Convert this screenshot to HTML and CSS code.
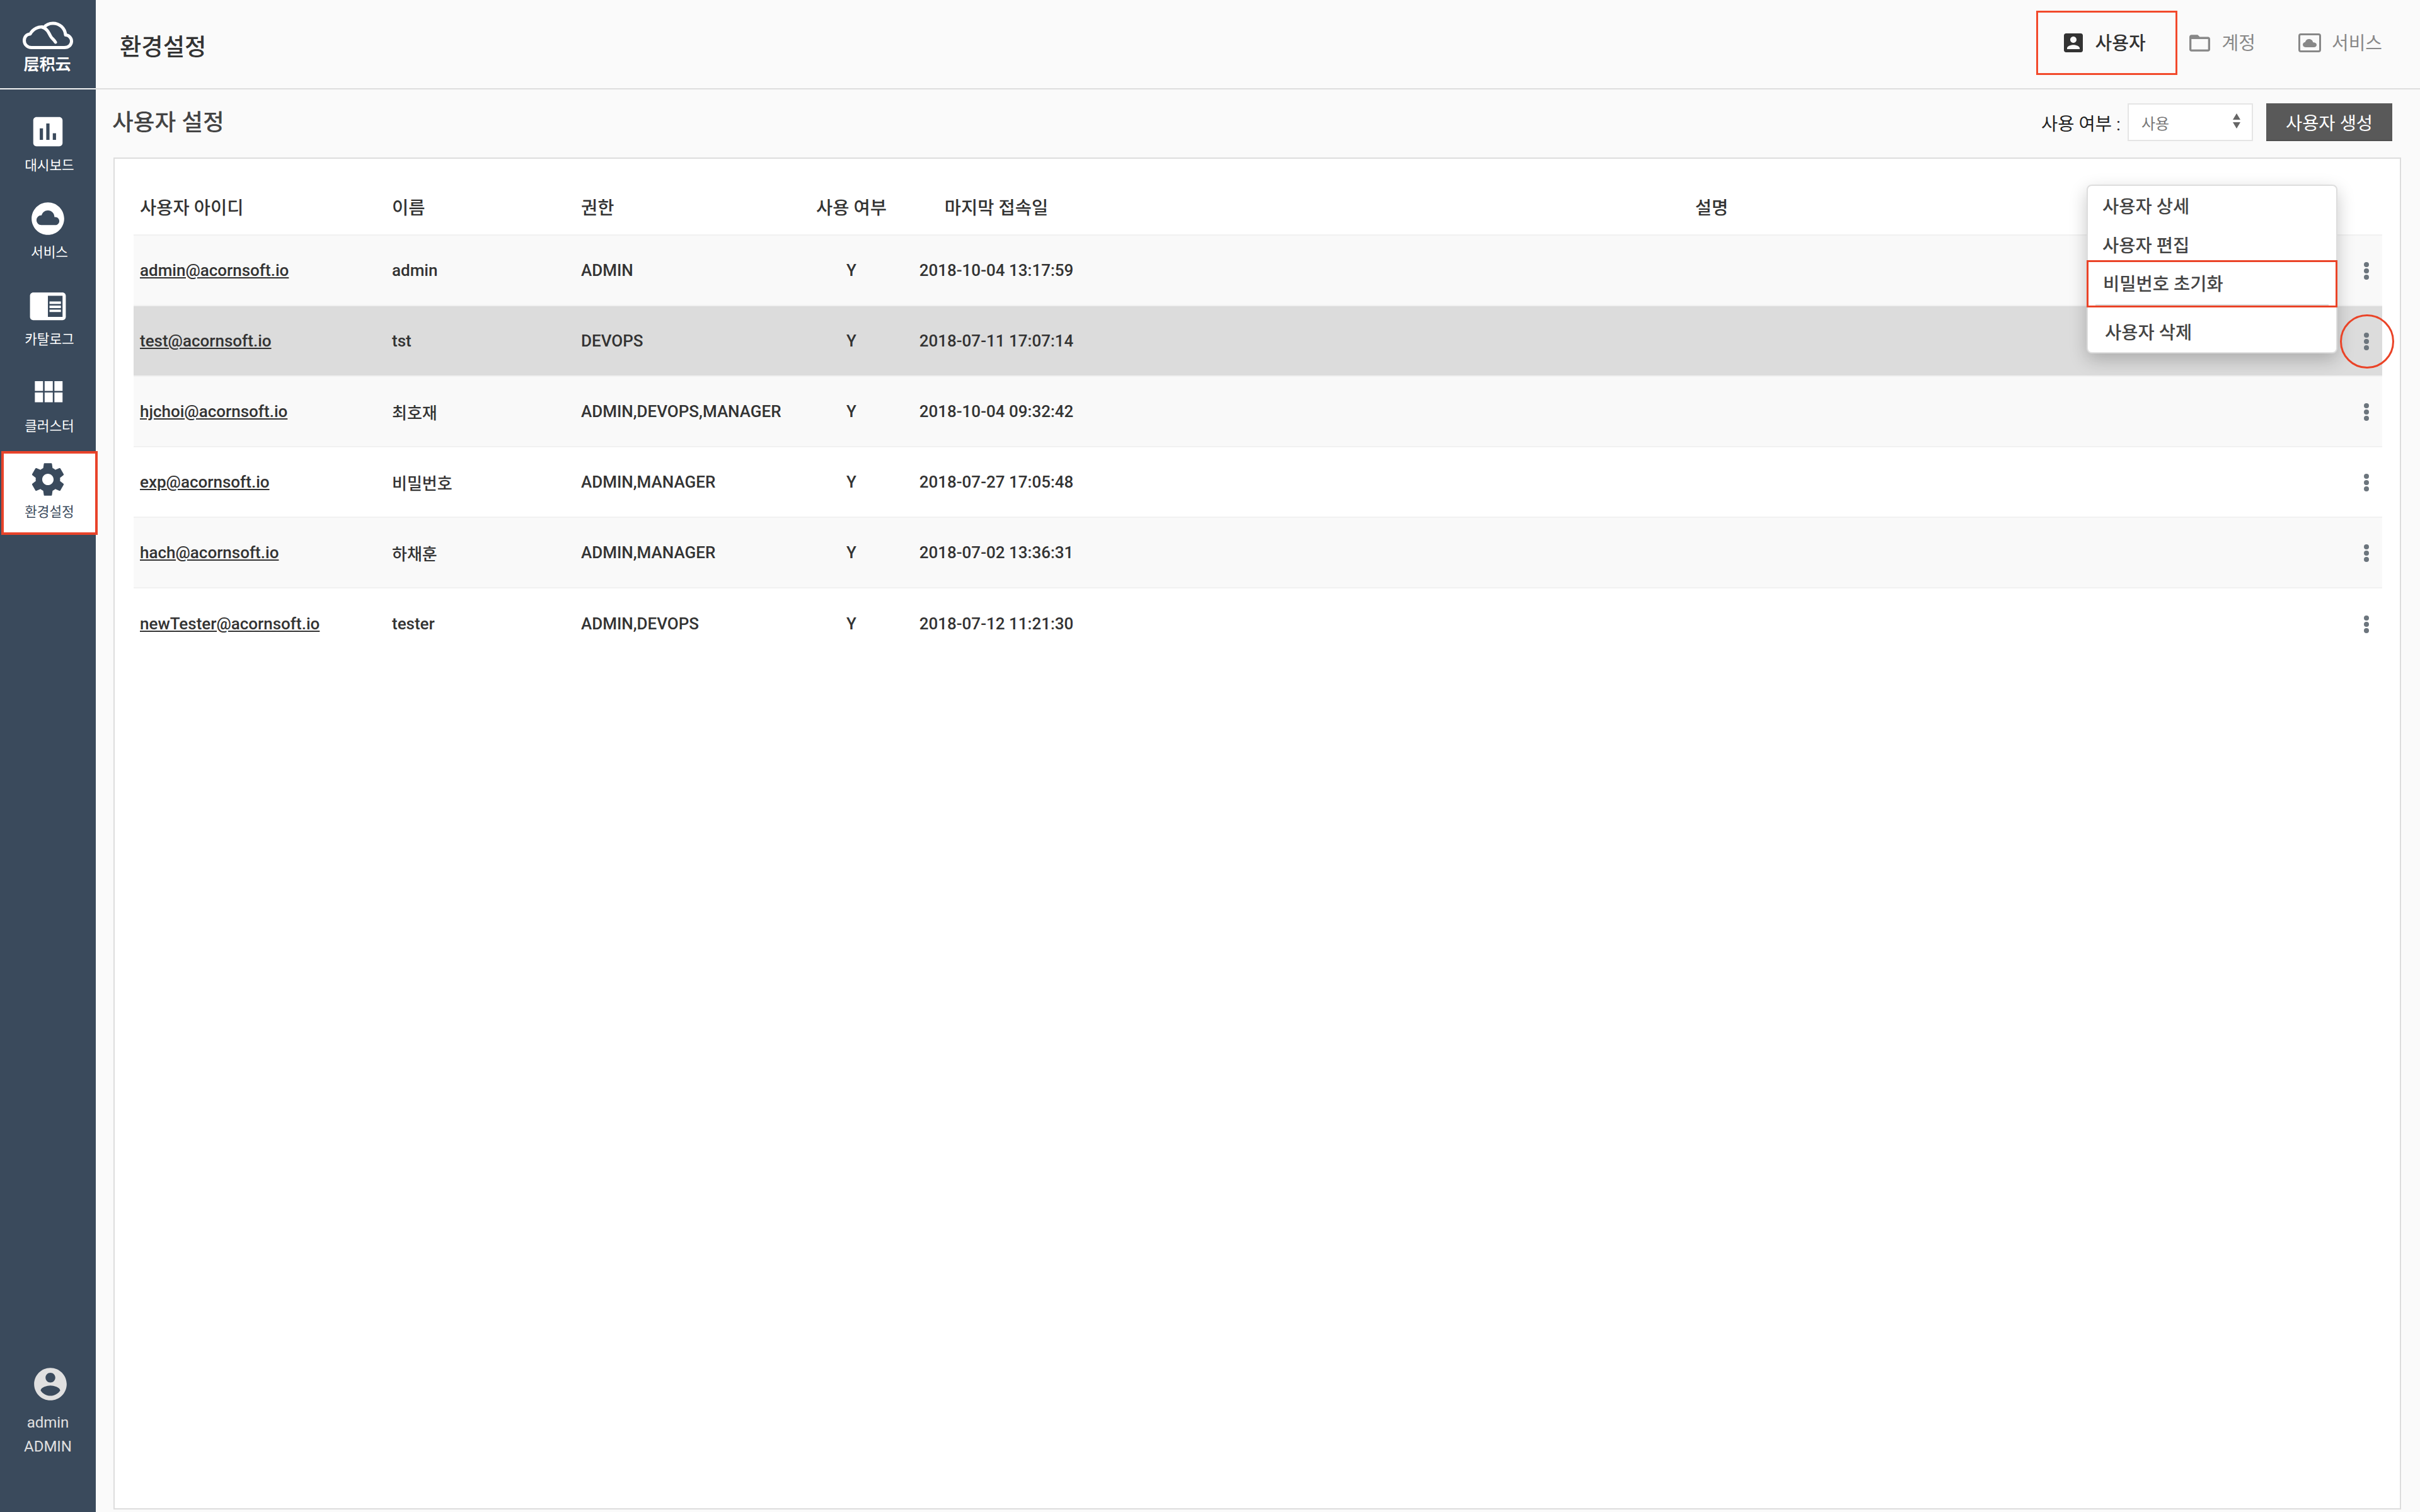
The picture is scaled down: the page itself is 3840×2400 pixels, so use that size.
FILE: index.html
```html
<!DOCTYPE html>
<html lang="ko">
<head>
<meta charset="utf-8">
<title>환경설정</title>
<link rel="stylesheet" href="styles.css">
</head>
<body>
<div class="app">
  <aside class="sidebar">
    <div class="logo">
      <svg class="logo-mark" viewBox="0 0 80 46" fill="none" stroke="#fff" stroke-width="5" stroke-linecap="round" stroke-linejoin="round"><path d="M14 41.5H66C73 41.5 77.5 37 77.5 31.5C77.5 26 73 21.5 68 21.5C67 10 58 3 48 3C42 3 37 5.5 34 9.5C26 7 16 12 12 20C7 20 2.5 24 2.5 30.5C2.5 36.5 7.5 41.5 14 41.5Z"/><path d="M31 9C38 11 41 17 44 23C46 27 50 29 52 33"/></svg>
      <div class="logo-text">层积云</div>
    </div>
    <nav class="nav">
      <a class="nav-item">
        <svg class="nav-icon" viewBox="0 0 24 24"><path d="M19 3H5c-1.1 0-2 .9-2 2v14c0 1.1.9 2 2 2h14c1.1 0 2-.9 2-2V5c0-1.1-.9-2-2-2zM9 17H7v-7h2v7zm4 0h-2V7h2v10zm4 0h-2v-4h2v4z"/></svg>
        <span class="nav-label">대시보드</span>
      </a>
      <a class="nav-item">
        <svg class="nav-icon" viewBox="0 0 24 24"><path d="M12 2C6.48 2 2 6.48 2 12s4.48 10 10 10 10-4.48 10-10S17.52 2 12 2zm4.5 14H8c-1.66 0-3-1.34-3-3s1.34-3 3-3l.14.01C8.58 8.28 10.13 7 12 7c2.21 0 4 1.79 4 4h.5c1.38 0 2.5 1.12 2.5 2.5S17.88 16 16.5 16z"/></svg>
        <span class="nav-label">서비스</span>
      </a>
      <a class="nav-item">
        <svg class="nav-icon" viewBox="0 0 24 24"><path d="M13 12h7v1.5h-7zm0-2.5h7V11h-7zm0 5h7V16h-7zM21 4H3c-1.1 0-2 .9-2 2v13c0 1.1.9 2 2 2h18c1.1 0 2-.9 2-2V6c0-1.1-.9-2-2-2zm0 15h-9V6h9v13z"/></svg>
        <span class="nav-label">카탈로그</span>
      </a>
      <a class="nav-item">
        <svg class="nav-icon" viewBox="0 0 24 24"><path d="M4 11h5V5H4v6zm0 7h5v-6H4v6zm6 0h5v-6h-5v6zm6 0h5v-6h-5v6zm-6-7h5V5h-5v6zm6-6v6h5V5h-5z"/></svg>
        <span class="nav-label">클러스터</span>
      </a>
      <a class="nav-item nav-item-active">
        <svg class="nav-icon" viewBox="0 0 24 24"><path d="M19.43 12.98c.04-.32.07-.64.07-.98s-.03-.66-.07-.98l2.11-1.65c.19-.15.24-.42.12-.64l-2-3.46c-.12-.22-.39-.3-.61-.22l-2.49 1c-.52-.4-1.08-.73-1.69-.98l-.38-2.65C14.46 2.18 14.25 2 14 2h-4c-.25 0-.46.18-.49.42l-.38 2.65c-.61.25-1.17.59-1.69.98l-2.49-1c-.23-.09-.49 0-.61.22l-2 3.46c-.13.22-.07.49.12.64l2.11 1.65c-.04.32-.07.65-.07.98s.03.66.07.98l-2.11 1.65c-.19.15-.24.42-.12.64l2 3.46c.12.22.39.3.61.22l2.49-1c.52.4 1.08.73 1.69.98l.38 2.65c.03.24.24.42.49.42h4c.25 0 .46-.18.49-.42l.38-2.65c.61-.25 1.17-.59 1.69-.98l2.49 1c.23.09.49 0 .61-.22l2-3.46c.12-.22.07-.49-.12-.64l-2.11-1.65zM12 15.5c-1.93 0-3.5-1.57-3.5-3.5s1.57-3.5 3.5-3.5 3.5 1.57 3.5 3.5-1.57 3.5-3.5 3.5z"/></svg>
        <span class="nav-label">환경설정</span>
      </a>
    </nav>
    <div class="user">
      <svg class="user-icon" viewBox="0 0 24 24"><path d="M12 2C6.48 2 2 6.48 2 12s4.48 10 10 10 10-4.48 10-10S17.52 2 12 2zm0 3c1.66 0 3 1.34 3 3s-1.34 3-3 3-3-1.34-3-3 1.34-3 3-3zm0 14.2c-2.5 0-4.71-1.28-6-3.22.03-1.99 4-3.08 6-3.08 1.99 0 5.97 1.09 6 3.08-1.29 1.94-3.5 3.22-6 3.22z"/></svg>
      <div class="user-line">admin</div>
      <div class="user-line">ADMIN</div>
    </div>
  </aside>

  <main class="main">
    <header class="topbar">
      <h1 class="page-title">환경설정</h1>
      <div class="tabs">
        <a class="tab tab-active">
          <svg class="tab-icon" viewBox="3 3 18 18"><path d="M3 5v14c0 1.1.89 2 2 2h14c1.1 0 2-.9 2-2V5c0-1.1-.9-2-2-2H5c-1.11 0-2 .9-2 2zm12 4c0 1.66-1.34 3-3 3s-3-1.34-3-3 1.34-3 3-3 3 1.34 3 3zm-9 8c0-2 4-3.1 6-3.1s6 1.1 6 3.1v1H6v-1z"/></svg>
          <span class="tab-text">사용자</span>
        </a>
        <a class="tab tab-account">
          <svg class="tab-icon-folder" viewBox="2 4 20 16"><path d="M20 6h-8l-2-2H4c-1.1 0-1.99.9-1.99 2L2 18c0 1.1.9 2 2 2h16c1.1 0 2-.9 2-2V8c0-1.1-.9-2-2-2zm0 12H4V8h16v10z"/></svg>
          <span class="tab-text">계정</span>
        </a>
        <a class="tab tab-service">
          <svg class="tab-icon-service" viewBox="0 0 36 30"><rect x="1.5" y="1.5" width="33" height="27" rx="2.5" fill="none" stroke="#888" stroke-width="3"/><path d="M11.5 22C8.5 22 7 20 7 17.8C7 15.6 8.6 14 10.7 13.9C11.5 11 14 9 17 9C20.4 9 22.8 11.4 23.3 14.2C26.6 14.2 29 15.8 29 18.2C29 20.6 27 22 24.5 22Z" fill="#888"/></svg>
          <span class="tab-text">서비스</span>
        </a>
      </div>
    </header>

    <section class="toolbar">
      <h2 class="section-title">사용자 설정</h2>
      <div class="controls">
        <span class="filter-label">사용 여부 :</span>
        <div class="select">
          <span>사용</span>
          <svg class="select-arrows" viewBox="0 0 12 24"><path d="M6 0L12 10H0Z"/><path d="M0 14H12L6 24Z"/></svg>
        </div>
        <button class="create-btn">사용자 생성</button>
      </div>
    </section>

    <section class="panel">
      <table class="users">
        <thead>
          <tr>
            <th class="col-id">사용자 아이디</th>
            <th class="col-name">이름</th>
            <th class="col-role">권한</th>
            <th class="col-use">사용 여부</th>
            <th class="col-date">마지막 접속일</th>
            <th class="col-desc">설명</th>
            <th class="col-more"></th>
          </tr>
        </thead>
        <tbody>
          <tr>
            <td class="col-id"><a class="user-link">admin@acornsoft.io</a></td><td class="col-name">admin</td><td class="col-role">ADMIN</td><td class="col-use">Y</td><td class="col-date">2018-10-04 13:17:59</td><td></td>
            <td class="col-more"><svg class="dots" viewBox="0 0 8 28"><circle cx="4" cy="4" r="4"/><circle cx="4" cy="14" r="4"/><circle cx="4" cy="24" r="4"/></svg></td>
          </tr>
          <tr class="row-selected">
            <td class="col-id"><a class="user-link">test@acornsoft.io</a></td><td class="col-name">tst</td><td class="col-role">DEVOPS</td><td class="col-use">Y</td><td class="col-date">2018-07-11 17:07:14</td><td></td>
            <td class="col-more"><svg class="dots" viewBox="0 0 8 28"><circle cx="4" cy="4" r="4"/><circle cx="4" cy="14" r="4"/><circle cx="4" cy="24" r="4"/></svg></td>
          </tr>
          <tr>
            <td class="col-id"><a class="user-link">hjchoi@acornsoft.io</a></td><td class="col-name">최호재</td><td class="col-role">ADMIN,DEVOPS,MANAGER</td><td class="col-use">Y</td><td class="col-date">2018-10-04 09:32:42</td><td></td>
            <td class="col-more"><svg class="dots" viewBox="0 0 8 28"><circle cx="4" cy="4" r="4"/><circle cx="4" cy="14" r="4"/><circle cx="4" cy="24" r="4"/></svg></td>
          </tr>
          <tr>
            <td class="col-id"><a class="user-link">exp@acornsoft.io</a></td><td class="col-name">비밀번호</td><td class="col-role">ADMIN,MANAGER</td><td class="col-use">Y</td><td class="col-date">2018-07-27 17:05:48</td><td></td>
            <td class="col-more"><svg class="dots" viewBox="0 0 8 28"><circle cx="4" cy="4" r="4"/><circle cx="4" cy="14" r="4"/><circle cx="4" cy="24" r="4"/></svg></td>
          </tr>
          <tr>
            <td class="col-id"><a class="user-link">hach@acornsoft.io</a></td><td class="col-name">하채훈</td><td class="col-role">ADMIN,MANAGER</td><td class="col-use">Y</td><td class="col-date">2018-07-02 13:36:31</td><td></td>
            <td class="col-more"><svg class="dots" viewBox="0 0 8 28"><circle cx="4" cy="4" r="4"/><circle cx="4" cy="14" r="4"/><circle cx="4" cy="24" r="4"/></svg></td>
          </tr>
          <tr>
            <td class="col-id"><a class="user-link">newTester@acornsoft.io</a></td><td class="col-name">tester</td><td class="col-role">ADMIN,DEVOPS</td><td class="col-use">Y</td><td class="col-date">2018-07-12 11:21:30</td><td></td>
            <td class="col-more"><svg class="dots" viewBox="0 0 8 28"><circle cx="4" cy="4" r="4"/><circle cx="4" cy="14" r="4"/><circle cx="4" cy="24" r="4"/></svg></td>
          </tr>
        </tbody>
      </table>

      <div class="menu">
        <a class="menu-item menu-item-first">사용자 상세</a>
        <a class="menu-item menu-item-second">사용자 편집</a>
        <a class="menu-item menu-item-marked">비밀번호 초기화</a>
        <a class="menu-item menu-item-last">사용자 삭제</a>
      </div>
      <div class="mark-circle"></div>
    </section>
  </main>
</div>
</body>
</html>
```
FILE: styles.css
```css
* { box-sizing: border-box; }
html, body { margin: 0; height: 100%; }
body {
  font-family: Roboto, "Noto Sans CJK KR", sans-serif;
  color: #333;
  background: #fafafa;
  overflow: hidden;
}
.app { display: flex; height: 2400px; }

/* Sidebar */
.sidebar {
  width: 152px;
  flex: none;
  background: #3a4a5c;
  display: flex;
  flex-direction: column;
  position: relative;
  z-index: 2;
}
.logo {
  height: 142px;
  border-bottom: 2px solid #f2f2f2;
  padding-top: 34px;
  display: flex;
  flex-direction: column;
  align-items: center;
}
.logo-mark { width: 80px; height: 46px; display: block; }
.logo-text {
  font-family: "Noto Sans CJK SC", sans-serif;
  font-size: 25px;
  line-height: 30px;
  font-weight: 700;
  color: #fff;
  margin-top: 5px;
  margin-right: 2px;
}
.nav { display: flex; flex-direction: column; padding-top: 22px; }
.nav-item {
  height: 138px;
  padding-top: 14px;
  display: flex;
  flex-direction: column;
  align-items: center;
  color: #fff;
}
.nav-icon { width: 62px; height: 62px; display: block; fill: #fff; }
.nav-label {
  font-size: 21.33px;
  line-height: 28px;
  margin-top: 9px;
  padding-left: 5px;
}
.nav-item-active {
  width: 153px;
  height: 133px;
  margin: 0 0 5px 2px;
  padding-top: 10px;
  border: 4px solid #e8432a;
  background: #fff;
  color: #3a4a5c;
}
.nav-item-active .nav-icon { fill: #3a4a5c; margin-right: 5px; }
.nav-item-active .nav-label { padding-left: 0; margin-top: 7px; }
.user {
  margin-top: auto;
  padding-bottom: 85px;
  display: flex;
  flex-direction: column;
  align-items: center;
  color: #e0e0e0;
}
.user-icon { width: 62px; height: 62px; fill: #e0e0e0; margin-left: 8px; margin-bottom: 11px; display: block; }
.user-line { font-size: 24px; line-height: 38px; }

/* Main */
.main { flex: 1; min-width: 0; display: flex; flex-direction: column; }
.topbar {
  height: 142px;
  flex: none;
  border-bottom: 2px solid #ddd;
  display: flex;
  justify-content: space-between;
  padding: 0 60px 0 38px;
}
.page-title {
  margin: 0;
  font-size: 37.33px;
  font-weight: 500;
  line-height: 150px;
  color: #333;
}
.tabs { display: flex; padding-top: 17px; align-items: flex-start; }
.tab {
  height: 102px;
  display: flex;
  align-items: center;
  font-size: 29px;
  color: #888;
}
.tab-text { margin-top: -5px; }
.tab-active {
  width: 224px;
  border: 3px solid #f2492b;
  padding-left: 41px;
  color: #333;
  font-weight: 500;
}
.tab-icon { width: 30px; height: 30px; fill: #333; margin-right: 20px; }
.tab-account { padding-left: 19px; padding-right: 68px; }
.tab-icon-folder { width: 33px; height: 27px; fill: #888; margin-right: 19px; }
.tab-icon-service { width: 36px; height: 30px; margin-right: 17px; }

.toolbar {
  height: 108px;
  flex: none;
  display: flex;
  justify-content: space-between;
  padding: 22px 44px 26px 26px;
}
.section-title {
  margin: 0;
  font-size: 36.67px;
  font-weight: 500;
  line-height: 62px;
  color: #444;
}
.controls { display: flex; align-items: center; }
.filter-label { font-size: 28.5px; color: #222; margin-right: 11px; }
.select {
  width: 199px;
  height: 60px;
  border: 2px solid #e5e5e5;
  background: #fff;
  display: flex;
  align-items: center;
  justify-content: space-between;
  padding: 0 18px 0 20px;
  font-size: 24px;
  color: #777;
}
.select-arrows { width: 12px; height: 24px; fill: #666; margin-top: -4px; }
.create-btn {
  width: 200px;
  height: 60px;
  margin-left: 21px;
  border: 0;
  border-bottom: 2px solid #505050;
  background: #595959;
  color: #fff;
  font: 400 28.5px Roboto, "Noto Sans CJK KR", sans-serif;
  padding: 0;
}

/* Panel and table */
.panel {
  flex: 1;
  position: relative;
  margin: 0 30px 4px 28px;
  border: 2px solid #ddd;
  background: #fff;
  padding: 30px 28px 0 30px;
}
.users {
  width: 3568px;
  table-layout: fixed;
  border-collapse: separate;
  border-spacing: 0;
  font-size: 26px;
}
.users th {
  height: 92px;
  padding: 0;
  font-size: 28.5px;
  font-weight: 500;
  color: #333;
  text-align: center;
  border-bottom: 2px solid #f1f1f1;
}
.users td {
  height: 112px;
  padding: 0;
  color: #333;
  font-weight: 500;
  border-bottom: 2px solid #f1f1f1;
}
.users tbody tr:nth-child(odd) { background: #f9f9f9; }
.users tbody tr.row-selected { background: #dcdcdc; }
.users tbody tr:last-child td { border-bottom: 0; }
.users .col-id { width: 400px; padding-left: 10px; text-align: left; }
.users .col-name { width: 300px; padding-left: 10px; text-align: left; }
.users .col-role { width: 354px; padding-left: 10px; text-align: left; }
.users .col-use { width: 170px; text-align: center; }
.users .col-date { width: 290px; text-align: center; }
.users .col-desc { width: 1980px; }
.users .col-more { width: 74px; padding-right: 21px; text-align: right; }
.user-link { text-decoration: underline; color: #333; }
.dots { width: 8px; height: 28px; fill: #6c757d; display: block; margin: 2px 0 0 auto; }

/* Row action menu */
.menu {
  position: absolute;
  top: 41px;
  right: 99px;
  width: 398px;
  height: 268px;
  background: #fff;
  border: 2px solid #ddd;
  border-radius: 8px;
  box-shadow: 0 10px 28px rgba(0, 0, 0, .22);
  display: flex;
  flex-direction: column;
  font-size: 28.5px;
  font-weight: 500;
  color: #444;
}
.menu-item { display: flex; align-items: center; padding-left: 23px; }
.menu-item-first { height: 63px; padding-bottom: 2px; }
.menu-item-second { height: 55px; padding-top: 3px; }
.menu-item-marked {
  position: relative;
  height: 75px;
  margin: 0 -2px;
  padding-left: 23px;
  padding-bottom: 4px;
  border: 3px solid #ea4327;
}
.menu-item-marked::after {
  content: "";
  position: absolute;
  left: 11px;
  right: 11px;
  bottom: 0;
  height: 2px;
  background: #ddd;
}
.menu-item-last { height: 71px; padding-top: 3px; padding-left: 27px; }
.mark-circle {
  position: absolute;
  left: 3531px;
  top: 247px;
  width: 86px;
  height: 86px;
  border: 3px solid #ea4327;
  border-radius: 50%;
}
```
